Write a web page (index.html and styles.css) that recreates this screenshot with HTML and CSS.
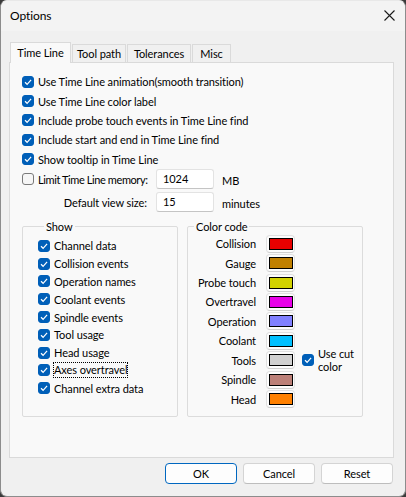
FILE: index.html
```html
<!DOCTYPE html>
<html>
<head>
<meta charset="utf-8">
<link rel="stylesheet" href="styles.css">
</head>
<body>
<div class="window">
  <div class="titlebar">
    <span class="title">Options</span>
    <svg class="close" width="11" height="11" viewBox="0 0 11 11"><path d="M0.5 0.5 L10.5 10.5 M10.5 0.5 L0.5 10.5" stroke="#1a1a1a" stroke-width="1.1" fill="none"/></svg>
  </div>
  <div class="tabs">
    <div class="tab active t1">Time Line</div>
    <div class="tab t2">Tool path</div>
    <div class="tab t3">Tolerances</div>
    <div class="tab t4">Misc</div>
  </div>
  <div class="panel">
    <div class="opts">
      <div class="row"><span class="cb on"><svg viewBox="0 0 12 12"><path d="M3 6.3 L5.1 8.3 L9.1 3.9"/></svg></span>Use Time Line animation(smooth transition)</div>
      <div class="row"><span class="cb on"><svg viewBox="0 0 12 12"><path d="M3 6.3 L5.1 8.3 L9.1 3.9"/></svg></span>Use Time Line color label</div>
      <div class="row"><span class="cb on"><svg viewBox="0 0 12 12"><path d="M3 6.3 L5.1 8.3 L9.1 3.9"/></svg></span>Include probe touch events in Time Line find</div>
      <div class="row"><span class="cb on"><svg viewBox="0 0 12 12"><path d="M3 6.3 L5.1 8.3 L9.1 3.9"/></svg></span>Include start and end in Time Line find</div>
      <div class="row"><span class="cb on"><svg viewBox="0 0 12 12"><path d="M3 6.3 L5.1 8.3 L9.1 3.9"/></svg></span>Show tooltip in Time Line</div>
    </div>
    <div class="mem">
      <div class="row memlabel"><span class="cb"></span><span class="tight">Limit Time Line memory:</span></div>
      <div class="field">1024</div>
      <div class="unit">MB</div>
      <div class="viewlabel">Default view size:</div>
      <div class="field">15</div>
      <div class="unit">minutes</div>
    </div>
    <div class="groups">
      <fieldset class="group show">
        <legend>Show</legend>
        <div class="srow"><span class="cb on"><svg viewBox="0 0 12 12"><path d="M3 6.3 L5.1 8.3 L9.1 3.9"/></svg></span>Channel data</div>
        <div class="srow"><span class="cb on"><svg viewBox="0 0 12 12"><path d="M3 6.3 L5.1 8.3 L9.1 3.9"/></svg></span>Collision events</div>
        <div class="srow"><span class="cb on"><svg viewBox="0 0 12 12"><path d="M3 6.3 L5.1 8.3 L9.1 3.9"/></svg></span>Operation names</div>
        <div class="srow"><span class="cb on"><svg viewBox="0 0 12 12"><path d="M3 6.3 L5.1 8.3 L9.1 3.9"/></svg></span>Coolant events</div>
        <div class="srow"><span class="cb on"><svg viewBox="0 0 12 12"><path d="M3 6.3 L5.1 8.3 L9.1 3.9"/></svg></span>Spindle events</div>
        <div class="srow"><span class="cb on"><svg viewBox="0 0 12 12"><path d="M3 6.3 L5.1 8.3 L9.1 3.9"/></svg></span>Tool usage</div>
        <div class="srow"><span class="cb on"><svg viewBox="0 0 12 12"><path d="M3 6.3 L5.1 8.3 L9.1 3.9"/></svg></span>Head usage</div>
        <div class="srow"><span class="cb on"><svg viewBox="0 0 12 12"><path d="M3 6.3 L5.1 8.3 L9.1 3.9"/></svg></span><span class="focus">Axes overtravel</span></div>
        <div class="srow"><span class="cb on"><svg viewBox="0 0 12 12"><path d="M3 6.3 L5.1 8.3 L9.1 3.9"/></svg></span>Channel extra data</div>
      </fieldset>
      <fieldset class="group colors">
        <legend>Color code</legend>
        <div class="cgrid">
          <span class="clabel">Collision</span><span class="sw"><i class="c-collision"></i></span><span></span>
          <span class="clabel">Gauge</span><span class="sw"><i class="c-gauge"></i></span><span></span>
          <span class="clabel">Probe touch</span><span class="sw"><i class="c-probe"></i></span><span></span>
          <span class="clabel">Overtravel</span><span class="sw"><i class="c-over"></i></span><span></span>
          <span class="clabel">Operation</span><span class="sw"><i class="c-oper"></i></span><span></span>
          <span class="clabel">Coolant</span><span class="sw"><i class="c-cool"></i></span><span></span>
          <span class="clabel">Tools</span><span class="sw"><i class="c-tools"></i></span>
          <span class="cut"><span class="cb on"><svg viewBox="0 0 12 12"><path d="M3 6.3 L5.1 8.3 L9.1 3.9"/></svg></span><span class="cuttext">Use cut<br>color</span></span>
          <span class="clabel">Spindle</span><span class="sw"><i class="c-spin"></i></span><span></span>
          <span class="clabel">Head</span><span class="sw"><i class="c-head"></i></span><span></span>
        </div>
      </fieldset>
    </div>
  </div>
  <div class="buttons">
    <div class="btn default">OK</div>
    <div class="btn">Cancel</div>
    <div class="btn">Reset</div>
  </div>
</div>
</body>
</html>
```

FILE: styles.css
```css
html, body {
  margin: 0;
  padding: 0;
}
body {
  width: 406px;
  height: 497px;
  background: #3a3a3a;
  font-family: "Lato", "Liberation Sans", sans-serif;
  font-size: 11px;
  letter-spacing: -0.08px;
  color: #000;
  overflow: hidden;
}
.window {
  box-sizing: border-box;
  width: 406px;
  height: 497px;
  background: #f0f0f0;
  border: 1px solid #8c8c8c;
  border-top-color: #e8e8e8;
  border-radius: 7px;
  display: flex;
  flex-direction: column;
  overflow: hidden;
}
.titlebar {
  height: 30px;
  flex: none;
  background: #f3f3f3;
  display: flex;
  align-items: center;
  justify-content: space-between;
  padding: 0 10px 0 9px;
}
.title {
  font-size: 12px;
  line-height: 16px;
  margin-top: -1px;
}
.close {
  display: block;
  margin-top: -1px;
}
.tabs {
  display: flex;
  align-items: flex-end;
  margin: 11px 0 0 9px;
  height: 20px;
  flex: none;
}
.tab {
  box-sizing: border-box;
  height: 18px;
  border: 1px solid #dadada;
  border-bottom: none;
  margin-right: 1px;
  text-align: center;
  line-height: 17px;
  background: #f0f0f0;
  white-space: nowrap;
}
.tab.active {
  height: 21px;
  background: #f9f9f9;
  position: relative;
  z-index: 1;
  margin-bottom: -1px;
  line-height: 19px;
}
.t1 { width: 61px; }
.t2 { width: 54px; }
.t3 { width: 64px; }
.t4 { width: 39px; }
.panel {
  box-sizing: border-box;
  width: 385px;
  height: 396px;
  margin-left: 8px;
  background: #f9f9f9;
  border: 1px solid #dadada;
  padding: 9px 0 0 12px;
  flex: none;
}
.row {
  display: flex;
  align-items: center;
  height: 19.4px;
  white-space: nowrap;
}
.cb {
  box-sizing: border-box;
  width: 12px;
  height: 12px;
  border-radius: 3px;
  border: 1px solid #7a7a7a;
  background: #f6f6f6;
  margin-right: 4px;
  flex: none;
  display: flex;
}
.cb.on {
  background: #005fb8;
  border-color: #005fb8;
}
.cb svg {
  width: 12px;
  height: 12px;
  margin: -1px;
  fill: none;
  stroke: #fff;
  stroke-width: 1.2;
}
.mem {
  display: grid;
  grid-template-columns: 125px 58px auto;
  grid-template-rows: 21px 21px;
  row-gap: 2px;
  column-gap: 0;
  align-items: center;
}
.memlabel { height: 21px; }
.tight { letter-spacing: -0.4px; }
.viewlabel {
  justify-self: end;
}
.field {
  box-sizing: border-box;
  width: 58px;
  height: 20px;
  margin-left: 9px;
  background: #fff;
  border: 1px solid #e3e3e3;
  border-bottom-color: #c4c4c4;
  border-radius: 3px;
  padding-left: 6px;
  line-height: 18px;
}
.unit {
  margin-left: 17px;
  padding-top: 3px;
}
.groups {
  display: flex;
  margin-top: 6px;
  gap: 9px;
  height: 198px;
}
.group {
  margin: 0;
  padding: 0;
  border: 1px solid #dcdcdc;
  border-radius: 2px;
  min-width: 0;
}
.group legend {
  margin-left: 6px;
  padding: 0 2px;
  line-height: 16px;
}
.show {
  width: 156px;
  box-sizing: border-box;
  padding: 2px 0 0 15px;
}
.colors {
  width: 176px;
  box-sizing: border-box;
  padding: 0;
}
.srow {
  display: flex;
  align-items: center;
  height: 17.8px;
  white-space: nowrap;
}
.focus {
  outline: 1px dotted #000;
  outline-offset: 0;
  line-height: 14px;
}
.cgrid {
  display: grid;
  grid-template-columns: 68px 29px 1fr;
  grid-auto-rows: 19.43px;
  column-gap: 10px;
  align-items: center;
  margin-top: -1px;
}
.clabel {
  justify-self: end;
  white-space: nowrap;
}
.sw {
  box-sizing: border-box;
  width: 29px;
  height: 18px;
  border: 1px solid #e0e0e0;
  border-bottom-color: #cfcfcf;
  border-radius: 4px;
  background: #fdfdfd;
  display: flex;
  align-items: center;
  justify-content: center;
}
.sw i {
  box-sizing: border-box;
  width: 24px;
  height: 12px;
  border: 1px solid #000;
}
.c-collision { background: #e80000; }
.c-gauge { background: #c08000; }
.c-probe { background: #d2d200; }
.c-over { background: #e800e8; }
.c-oper { background: #8080ff; }
.c-cool { background: #00c0ff; }
.c-tools { background: #d0d0d0; }
.c-spin { background: #bc8078; }
.c-head { background: #ff8000; }
.cut {
  display: flex;
  align-items: center;
  margin-left: -3px;
}
.cuttext {
  line-height: 13px;
  white-space: nowrap;
}
.buttons {
  display: flex;
  justify-content: flex-end;
  gap: 6px;
  padding: 5px 12px 0 0;
}
.btn {
  box-sizing: border-box;
  width: 72px;
  height: 21px;
  background: #fdfdfd;
  border: 1px solid #d4d4d4;
  border-bottom-color: #bdbdbd;
  border-radius: 4px;
  text-align: center;
  line-height: 19px;
}
.btn.default {
  border: 1px solid #0067c0;
}
```
